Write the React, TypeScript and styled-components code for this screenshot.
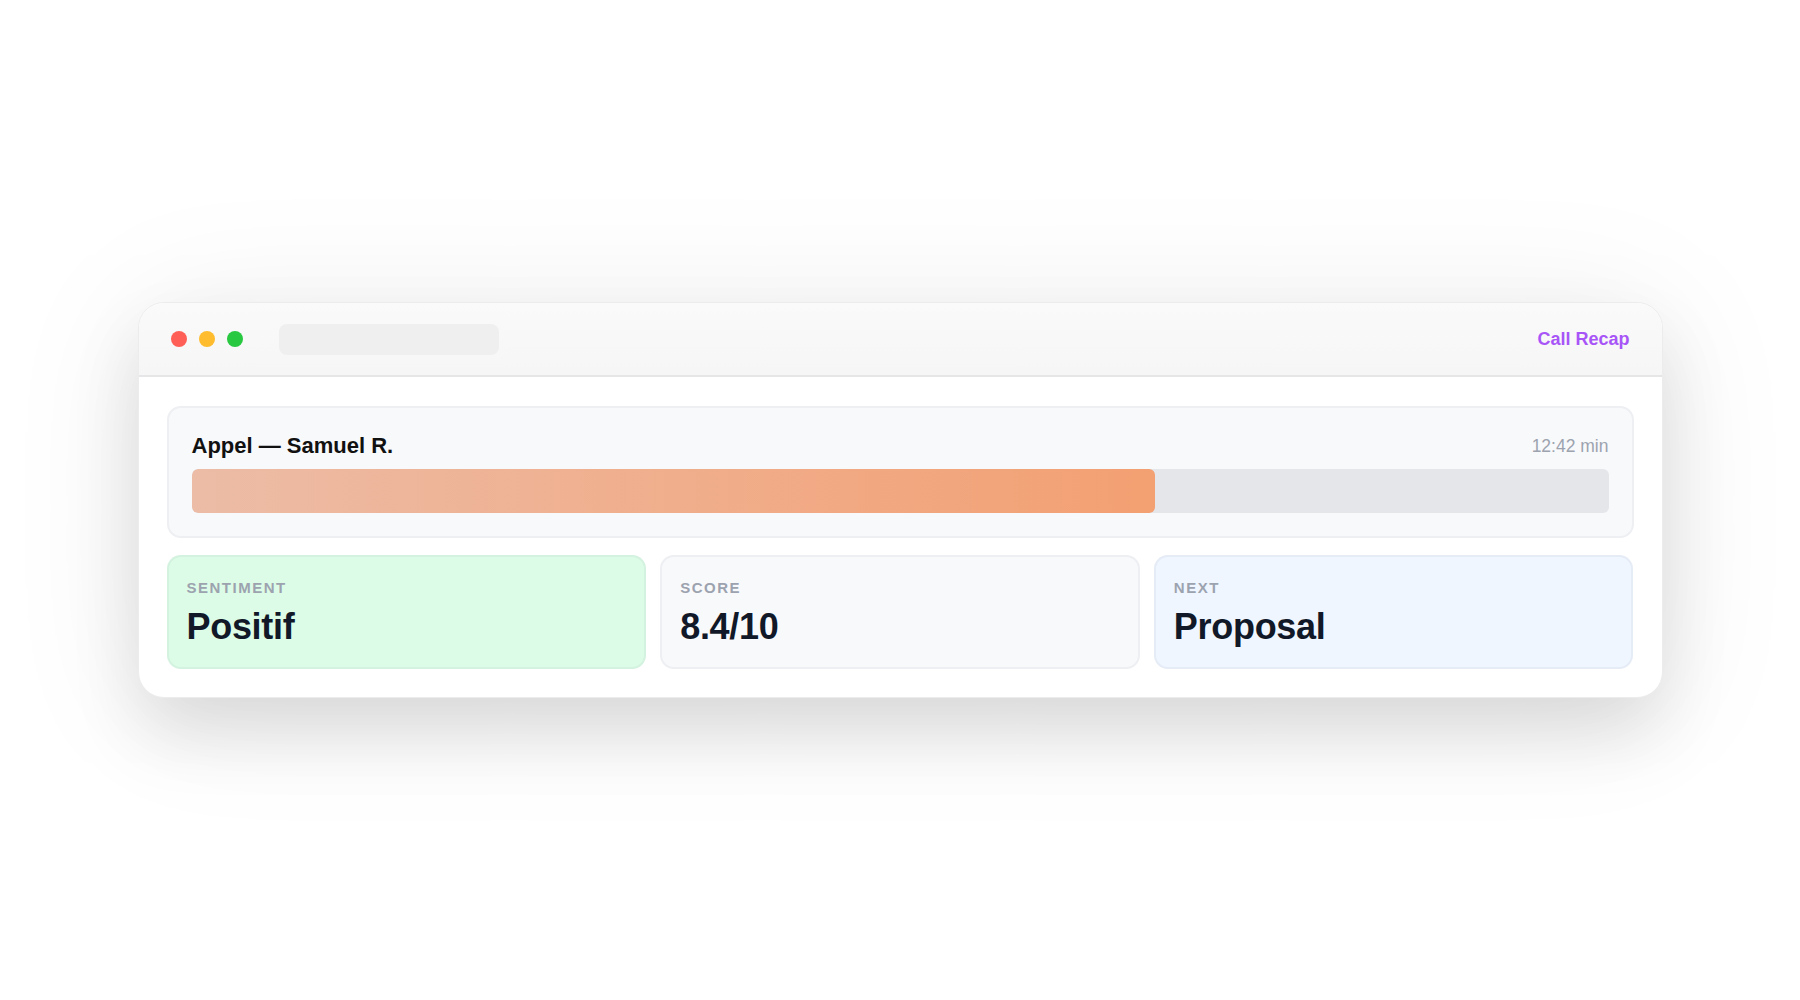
import React from 'react';
import styled, { createGlobalStyle } from 'styled-components';

const GlobalStyle = createGlobalStyle`
  html, body {
    margin: 0;
    padding: 0;
    background: #ffffff;
    font-family: "Liberation Sans", Arial, Helvetica, sans-serif;
  }
`;

const Page = styled.div`
  height: 1000px;
  display: flex;
  align-items: center;
  justify-content: center;
`;

const Window = styled.div`
  width: 1525px;
  box-sizing: border-box;
  background: #ffffff;
  border: 1px solid #ececec;
  border-radius: 26px;
  overflow: hidden;
  box-shadow: 0 36px 70px rgba(0, 0, 0, 0.11), 0 10px 140px rgba(0, 0, 0, 0.08);
`;

const TitleBar = styled.div`
  height: 72px;
  display: flex;
  align-items: center;
  padding: 0 32px;
  background: linear-gradient(180deg, #fafafa 0%, #f6f6f6 100%);
  border-bottom: 2px solid #e6e6e8;
`;

const Lights = styled.div`
  display: flex;
  gap: 12px;
`;

const Light = styled.span<{ $c: string }>`
  width: 16px;
  height: 16px;
  border-radius: 50%;
  background: ${p => p.$c};
`;

const AddressBar = styled.div`
  width: 220px;
  height: 31px;
  margin-left: 36px;
  border-radius: 8px;
  background: #efefef;
`;

const AppName = styled.div`
  margin-left: auto;
  font-size: 18px;
  font-weight: 700;
  color: #a855f7;
`;

const Body = styled.div`
  padding: 29px 28px 28px;
  display: flex;
  flex-direction: column;
  gap: 17px;
`;

const CallCard = styled.div`
  background: #f8f9fb;
  border: 2px solid #eeeff2;
  border-radius: 14px;
  padding: 25px 23px 23px;
  display: flex;
  flex-direction: column;
  gap: 10px;
`;

const CallHead = styled.div`
  display: flex;
  align-items: center;
  justify-content: space-between;
`;

const CallTitle = styled.div`
  font-size: 22px;
  font-weight: 700;
  color: #111111;
`;

const Duration = styled.div`
  font-size: 17.5px;
  color: #9ca3af;
`;

const Track = styled.div`
  height: 44px;
  border-radius: 6px;
  background: #e5e6ea;
  overflow: hidden;
`;

const Fill = styled.div`
  height: 100%;
  border-radius: 6px;
  background: linear-gradient(90deg, #ecbca6 0%, #f0ae8c 50%, #f3a072 100%);
`;

const Stats = styled.div`
  display: grid;
  grid-template-columns: repeat(3, 1fr);
  gap: 14px;
`;

const StatCard = styled.div<{ $bg: string }>`
  background: ${p => p.$bg};
  border: 2px solid rgba(17, 24, 39, 0.045);
  border-radius: 14px;
  padding: 22px 18px 19px;
  display: flex;
  flex-direction: column;
  gap: 10px;
`;

const StatLabel = styled.div`
  font-size: 15px;
  font-weight: 700;
  letter-spacing: 0.1em;
  text-transform: uppercase;
  color: #9ca3af;
`;

const StatValue = styled.div`
  font-size: 36px;
  font-weight: 700;
  color: #111827;
  letter-spacing: -0.3px;
`;

const stats = [
  { label: 'Sentiment', value: 'Positif', bg: '#dcfce7' },
  { label: 'Score', value: '8.4/10', bg: '#f8f9fb' },
  { label: 'Next', value: 'Proposal', bg: '#eff6ff' },
];

const progress = 68;

export default function App() {
  return (
    <Page>
      <GlobalStyle />
      <Window>
        <TitleBar>
          <Lights>
            <Light $c="#ff5f57" />
            <Light $c="#febc2e" />
            <Light $c="#28c840" />
          </Lights>
          <AddressBar />
          <AppName>Call Recap</AppName>
        </TitleBar>
        <Body>
          <CallCard>
            <CallHead>
              <CallTitle>Appel — Samuel R.</CallTitle>
              <Duration>12:42 min</Duration>
            </CallHead>
            <Track>
              <Fill style={{ width: `${progress}%` }} />
            </Track>
          </CallCard>
          <Stats>
            {stats.map(s => (
              <StatCard key={s.label} $bg={s.bg}>
                <StatLabel>{s.label}</StatLabel>
                <StatValue>{s.value}</StatValue>
              </StatCard>
            ))}
          </Stats>
        </Body>
      </Window>
    </Page>
  );
}
